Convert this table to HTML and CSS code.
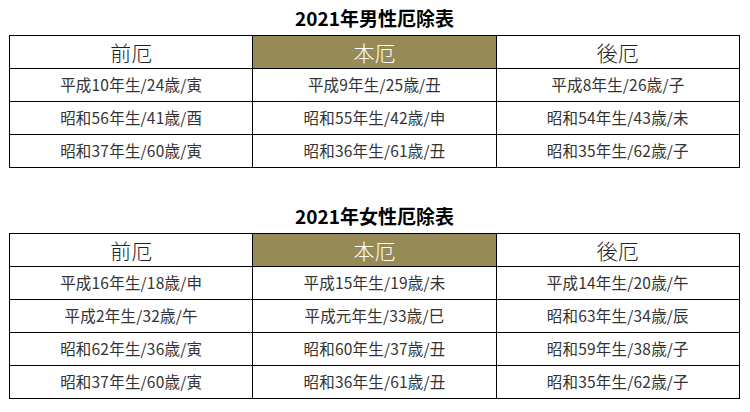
FILE: index.html
```html
<!DOCTYPE html>
<html lang="ja">
<head>
<meta charset="utf-8">
<link rel="stylesheet" href="styles.css">
</head>
<body>
<div class="page">
  <section class="block">
    <h2 class="title">2021年男性厄除表</h2>
    <table class="yaku">
      <tr class="head"><th>前厄</th><th class="main">本厄</th><th>後厄</th></tr>
      <tr><td>平成10年生/24歳/寅</td><td>平成9年生/25歳/丑</td><td>平成8年生/26歳/子</td></tr>
      <tr><td>昭和56年生/41歳/酉</td><td>昭和55年生/42歳/申</td><td>昭和54年生/43歳/未</td></tr>
      <tr><td>昭和37年生/60歳/寅</td><td>昭和36年生/61歳/丑</td><td>昭和35年生/62歳/子</td></tr>
    </table>
  </section>
  <section class="block second">
    <h2 class="title">2021年女性厄除表</h2>
    <table class="yaku">
      <tr class="head"><th>前厄</th><th class="main">本厄</th><th>後厄</th></tr>
      <tr><td>平成16年生/18歳/申</td><td>平成15年生/19歳/未</td><td>平成14年生/20歳/午</td></tr>
      <tr><td>平成2年生/32歳/午</td><td>平成元年生/33歳/巳</td><td>昭和63年生/34歳/辰</td></tr>
      <tr><td>昭和62年生/36歳/寅</td><td>昭和60年生/37歳/丑</td><td>昭和59年生/38歳/子</td></tr>
      <tr><td>昭和37年生/60歳/寅</td><td>昭和36年生/61歳/丑</td><td>昭和35年生/62歳/子</td></tr>
    </table>
  </section>
</div>
</body>
</html>
```
FILE: styles.css
```css
html, body {
  margin: 0;
  padding: 0;
  background: #ffffff;
}
body {
  font-family: "Noto Sans CJK JP", "Noto Sans", sans-serif;
  color: #333333;
}
.page {
  padding: 0 10px 0 9px;
}
.block {
  display: flex;
  flex-direction: column;
}
.second {
  margin-top: 30px;
}
.title {
  margin: 0;
  height: 35px;
  display: flex;
  align-items: center;
  justify-content: center;
  font-size: 19px;
  font-weight: 700;
  color: #000000;
  line-height: 1;
}
.yaku {
  width: 731px;
  border-collapse: collapse;
  table-layout: fixed;
}
.yaku th, .yaku td {
  border: 1px solid #000000;
  padding: 0;
  height: 32px;
  text-align: center;
  vertical-align: middle;
  line-height: 1;
}
.yaku th {
  font-size: 21px;
  font-weight: 300;
  color: #222222;
}
.yaku th.main {
  background: #968b57;
  color: #ffffff;
}
.yaku td {
  font-size: 15.5px;
  font-weight: 400;
  letter-spacing: 0.2px;
  color: #333333;
}
```
